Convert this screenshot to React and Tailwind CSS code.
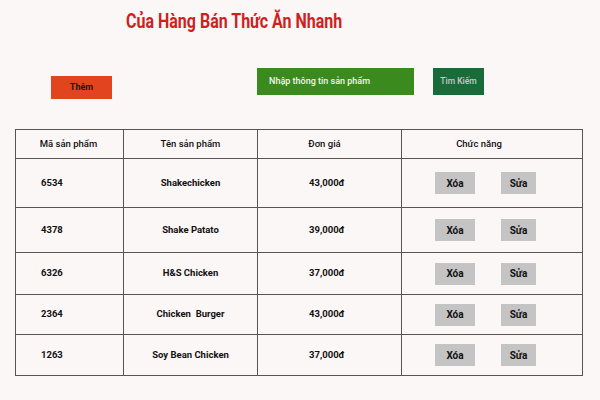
import React from 'react';

const products = [
  { id: '6534', name: 'Shakechicken', price: '43,000đ', h: 'h-[49px]' },
  { id: '4378', name: 'Shake Patato', price: '39,000đ', h: 'h-[45px]' },
  { id: '6326', name: 'H&S Chicken', price: '37,000đ', h: 'h-[42px]' },
  { id: '2364', name: 'Chicken  Burger', price: '43,000đ', h: 'h-[40px]' },
  { id: '1263', name: 'Soy Bean Chicken', price: '37,000đ', h: 'h-[41px]' },
];

const App = () => {
  return (
    <div className="w-[600px] h-[400px] overflow-hidden bg-[#fcf7f7] font-['Roboto',sans-serif] text-[#111]">
      {/* title */}
      <div className="pt-[9px] pl-[126px] h-[40px]">
        <h1 className="inline-block origin-left scale-x-[0.8] text-[20px] font-bold leading-[24px] text-[#cf1f1f] whitespace-nowrap">
          Của Hàng Bán Thức Ăn Nhanh
        </h1>
      </div>

      {/* toolbar */}
      <div className="flex items-start mt-[28px]">
        <button className="ml-[51px] mt-[8px] w-[61px] h-[23px] bg-[#e2441f] text-[9px] font-bold text-[#1a1a1a]">
          Thêm
        </button>
        <div className="ml-[145px] w-[157px] h-[27px] bg-[#3a8a1e] flex items-center pl-[12px] text-[9px] font-medium text-[#f4f4f4]">
          Nhập thông tin sản phẩm
        </div>
        <button className="ml-[19px] w-[51px] h-[27px] bg-[#1a6b3a] text-[8.5px] font-medium text-[#c9c9c9]">
          Tìm Kiếm
        </button>
      </div>

      {/* table */}
      <table className="ml-[15px] mt-[30px] w-[567px] table-fixed border-collapse text-[9.5px] font-bold">
        <colgroup>
          <col className="w-[108px]" />
          <col className="w-[134px]" />
          <col className="w-[144px]" />
          <col className="w-[181px]" />
        </colgroup>
        <thead>
          <tr className="h-[29px]">
            <th className="border border-[#555] font-medium pr-[2px]">Mã sản phẩm</th>
            <th className="border border-[#555] font-medium">Tên sản phẩm</th>
            <th className="border border-[#555] font-medium pr-[10px]">Đơn giá</th>
            <th className="border border-[#555] font-medium pr-[26px]">Chức năng</th>
          </tr>
        </thead>
        <tbody>
          {products.map((p) => (
            <tr key={p.id} className={p.h}>
              <td className="border border-[#555] pl-[25px]">{p.id}</td>
              <td className="border border-[#555] text-center whitespace-pre">{p.name}</td>
              <td className="border border-[#555] pl-[51px]">{p.price}</td>
              <td className="border border-[#555]">
                <div className="flex items-center pl-[33px] gap-[26px]">
                  <button className="w-[40px] h-[22px] bg-[#c4c4c4] text-[10px] font-bold">Xóa</button>
                  <button className="w-[35px] h-[22px] bg-[#c4c4c4] text-[10px] font-bold">Sửa</button>
                </div>
              </td>
            </tr>
          ))}
        </tbody>
      </table>
    </div>
  );
};

export default App;
